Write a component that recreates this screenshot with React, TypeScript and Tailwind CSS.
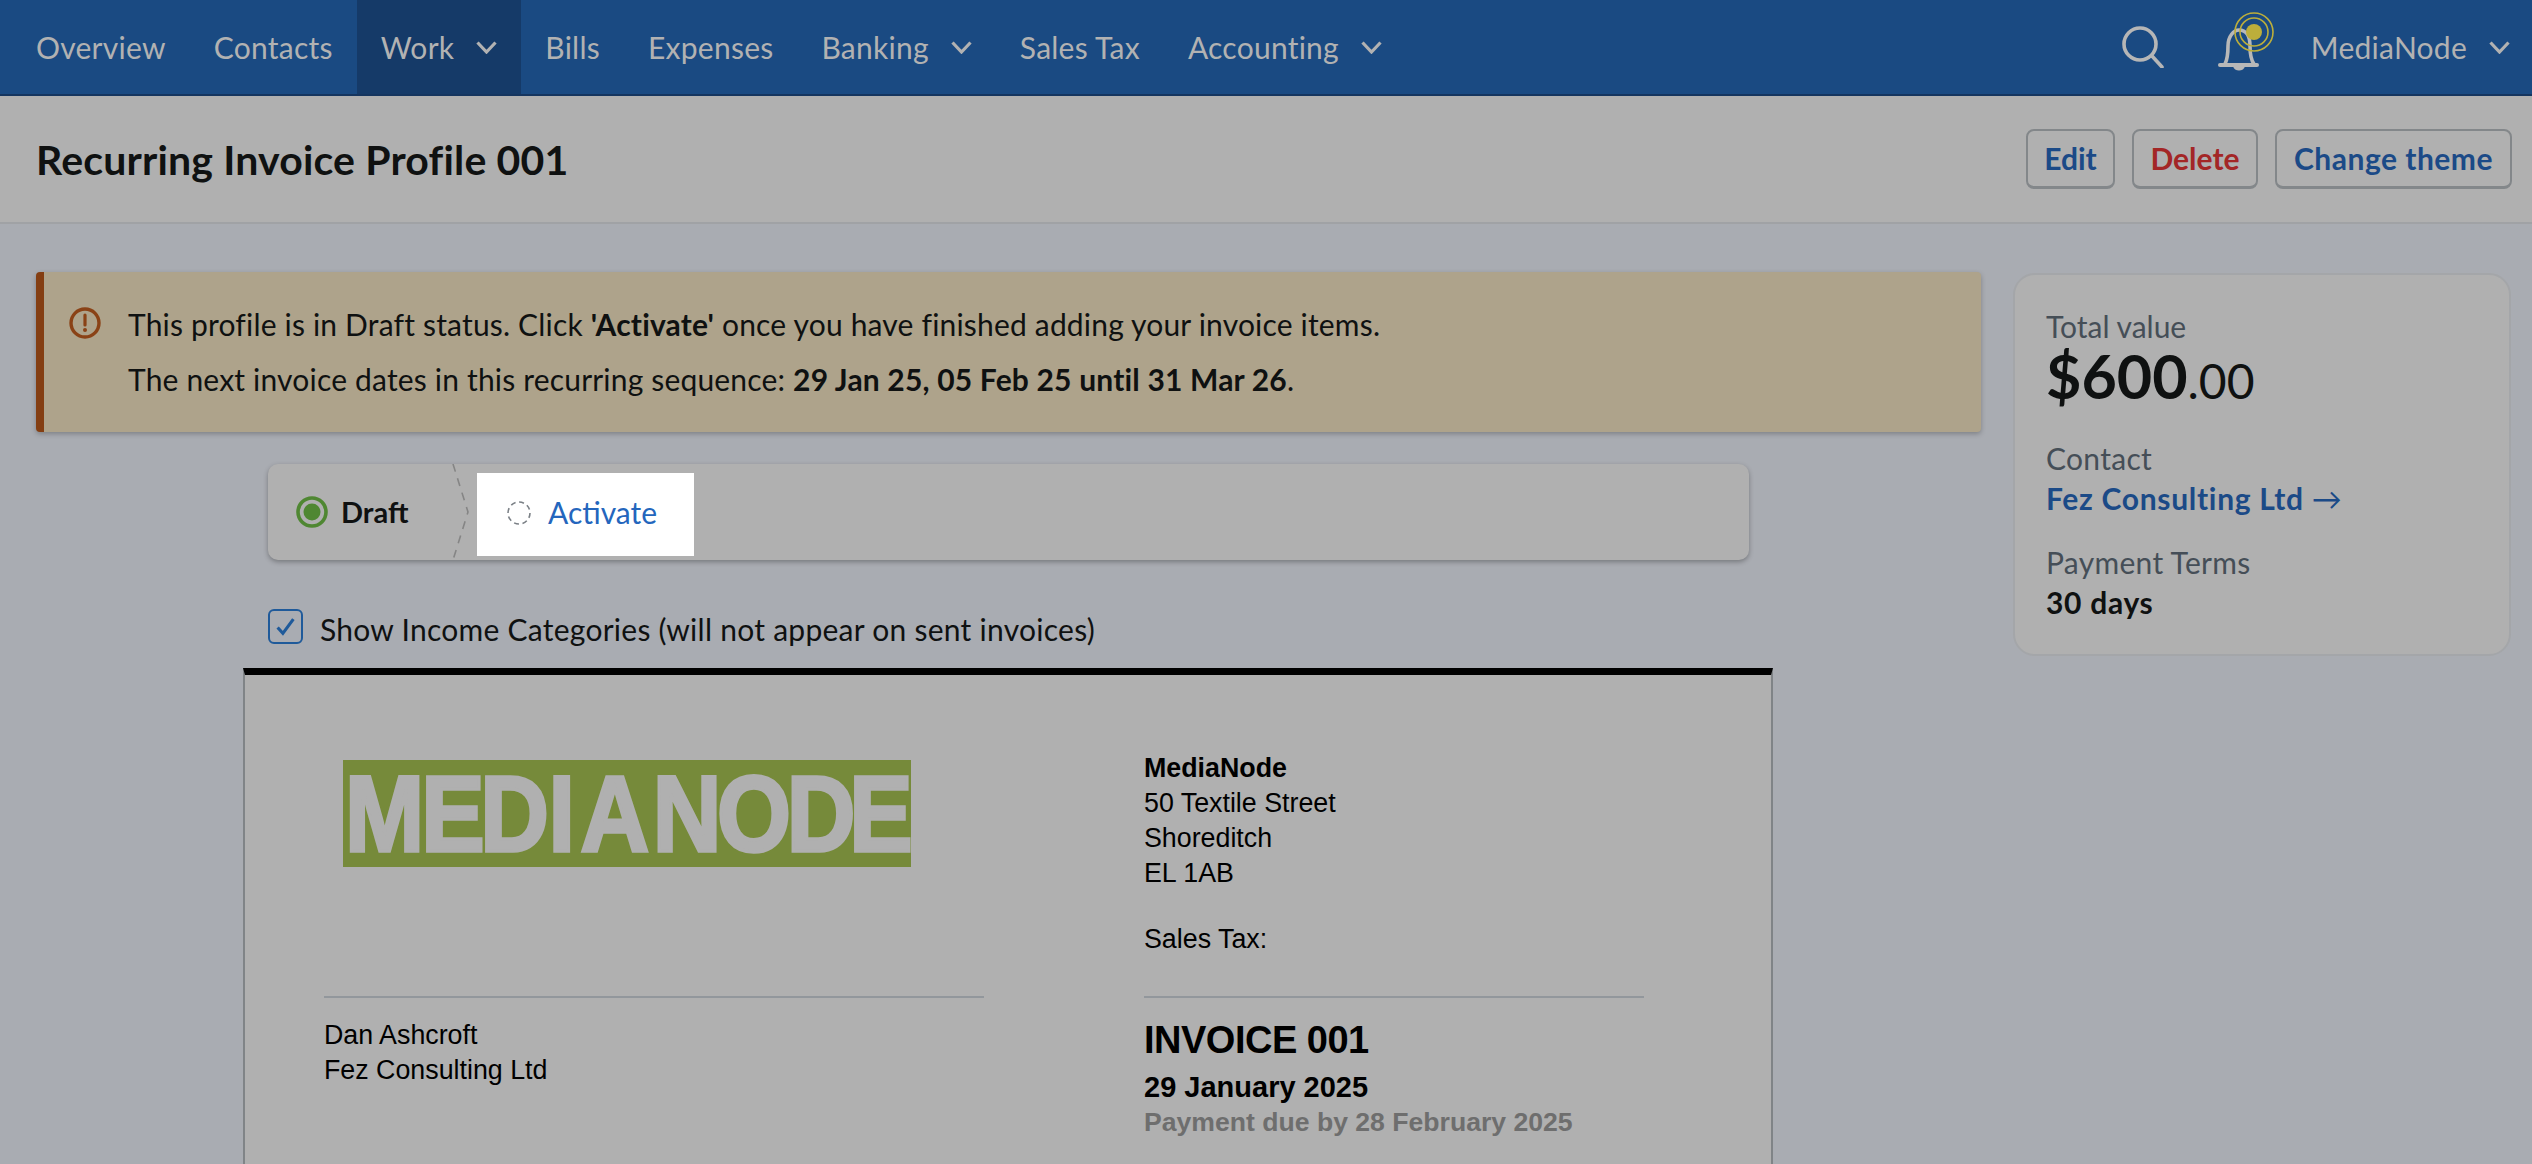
import React from "react";

function Chevron({ className = "" }: { className?: string }) {
  return (
    <svg viewBox="0 0 21 13" className={"w-[21px] h-[13px] " + className} fill="none">
      <path d="M1.5 1.5 L10.5 11 L19.5 1.5" stroke="#b2b2b2" strokeWidth="3.2" />
    </svg>
  );
}

function NavItem({ label, caret, active }: { label: string; caret?: boolean; active?: boolean }) {
  return (
    <div className={"flex h-[94px] items-center gap-[22px] px-[24px] " + (active ? "bg-[#153a68]" : "")}>
      <span>{label}</span>
      {caret && <Chevron />}
    </div>
  );
}

function HeaderButton({ label, className }: { label: string; className: string }) {
  return (
    <div className={"flex h-[60px] items-center justify-center rounded-[8px] border-2 border-b-[3px] border-[#83878a] text-[30px] font-bold " + className}>
      {label}
    </div>
  );
}

export default function App() {
  return (
    <div className="h-[1164px] w-[2532px] overflow-hidden bg-[#a9acb2] [font-family:Lato,sans-serif] text-[#0f1111]">
      <nav className="flex h-[96px] border-b-2 border-[#15355f] bg-[#1a4a82] pl-[12px] pr-[22px] text-[30px] tracking-[0.25px] text-[#b2b2b2]">
        <NavItem label="Overview" />
        <NavItem label="Contacts" />
        <NavItem label="Work" caret active />
        <NavItem label="Bills" />
        <NavItem label="Expenses" />
        <NavItem label="Banking" caret />
        <NavItem label="Sales Tax" />
        <NavItem label="Accounting" caret />
        <div className="ml-auto flex h-[94px] items-center">
          <svg viewBox="0 0 42 42" className="h-[42px] w-[42px]" fill="none" stroke="#b6b6b6" strokeWidth="3.6" strokeLinecap="round">
            <circle cx="18" cy="18" r="16" />
            <path d="M30 30 L40 41" />
          </svg>
          <svg viewBox="0 0 60 62" className="ml-[52px] mt-[10px] h-[62px] w-[60px] self-start" fill="none">
            <path d="M9 54 C11 50 12 46 12 36 C12 26 18 20 23 20 C30 20 34 26 34 36 C34 46 35 50 38 54" stroke="#b8b8b8" strokeWidth="3.6" />
            <path d="M4 55 L41 55" stroke="#b8b8b8" strokeWidth="4" strokeLinecap="round" />
            <path d="M17 56 C18 62 28 62 29 56 Z" fill="#b8b8b8" />
            <circle cx="38" cy="22" r="19" stroke="#bcae3b" strokeWidth="1.6" />
            <circle cx="38" cy="22" r="14" stroke="#bcae3b" strokeWidth="1.6" />
            <circle cx="38" cy="22" r="8" fill="#bcae3b" />
          </svg>
          <span className="ml-[35px]">MediaNode</span>
          <Chevron className="ml-[22px]" />
        </div>
      </nav>

      <header className="flex h-[128px] items-center justify-between border-b-2 border-[#a0a2a5] bg-[#b0b0b0] pl-[36px] pr-[20px]">
        <h1 className="text-[41px] font-bold leading-none tracking-[0.17px] text-[#0f1111]">Recurring Invoice Profile 001</h1>
        <div className="flex gap-[17px]">
          <HeaderButton label="Edit" className="w-[89px] text-[#1b4a87]" />
          <HeaderButton label="Delete" className="w-[126px] text-[#a32626]" />
          <HeaderButton label="Change theme" className="w-[237px] tracking-[0.5px] text-[#1b4a87]" />
        </div>
      </header>

      <main className="flex items-start gap-[32px] pl-[36px] pt-[48px]">
        <div className="w-[1945px] shrink-0">
          <div className="flex h-[160px] rounded-[4px] border-l-[8px] border-[#843e12] bg-[#aea38b] pl-[25px] pt-[34px] shadow-[0_2px_5px_rgba(0,0,0,0.25)]">
            <svg viewBox="0 0 32 32" className="mt-[1px] h-[32px] w-[32px] shrink-0" fill="none">
              <circle cx="16" cy="16" r="14" stroke="#8a4216" strokeWidth="3.4" />
              <path d="M16 8 L16 18" stroke="#8a4216" strokeWidth="3.2" strokeLinecap="round" />
              <circle cx="16" cy="23" r="2" fill="#8a4216" />
            </svg>
            <div className="ml-[27px] text-[30px] leading-[55px] tracking-[0.18px] text-[#0f1111]">
              <p className="-mt-[9px]">
                This profile is in Draft status. Click <b>'Activate'</b> once you have finished adding your invoice items.
              </p>
              <p>
                The next invoice dates in this recurring sequence: <b>29 Jan 25, 05 Feb 25 until 31 Mar 26</b>.
              </p>
            </div>
          </div>

          <div className="ml-[232px] mt-[32px] flex h-[96px] w-[1481px] items-start rounded-[10px] bg-[#b0b0b0] pl-[28px] shadow-[0_2px_5px_rgba(0,0,0,0.3)]">
            <div className="flex h-[96px] items-center">
              <svg viewBox="0 0 32 32" className="h-[32px] w-[32px]" fill="none">
                <circle cx="16" cy="16" r="14" stroke="#4f8732" strokeWidth="3.6" />
                <circle cx="16" cy="16" r="8.5" fill="#4f8732" />
              </svg>
              <span className="ml-[13px] w-[71px] text-[29px] font-bold text-[#0f1111]">Draft</span>
              <svg viewBox="0 0 18 96" className="ml-[40px] h-[96px] w-[18px]" fill="none">
                <path d="M1 0 L16 48 L1 96" stroke="#858585" strokeWidth="1.6" strokeDasharray="8 7" />
              </svg>
            </div>
            <div className="ml-[7px] mt-[9px] flex h-[83px] w-[217px] items-center bg-white pb-[5px] pl-[30px]">
              <svg viewBox="0 0 24 24" className="mt-[1px] h-[24px] w-[24px]" fill="none">
                <circle cx="12" cy="12" r="11" stroke="#7b8086" strokeWidth="1.6" strokeDasharray="5 3.6" />
              </svg>
              <span className="ml-[17px] text-[30px] text-[#2466bd]">Activate</span>
            </div>
          </div>

          <div className="ml-[232px] mt-[38px] flex items-center">
            <div className="flex h-[35px] w-[35px] items-center justify-center rounded-[6px] border-2 border-[#1f5a9a]">
              <svg viewBox="0 0 20 20" className="h-[21px] w-[21px]" fill="none">
                <path d="M2.5 11 L7.5 16.5 L17.5 3" stroke="#1f5a9a" strokeWidth="3" />
              </svg>
            </div>
            <span className="mb-[2px] ml-[17px] mt-[8px] text-[30px] leading-[46px] tracking-[0.26px] text-[#0f1111]">Show Income Categories (will not appear on sent invoices)</span>
          </div>

          <div className="ml-[207px] mt-[14px] h-[520px] w-[1530px] border-x-2 border-t-[7px] border-x-[#808487] border-t-black bg-[#b0b0b0] pl-[79px] [font-family:'Liberation_Sans',sans-serif] text-black">
            <div className="flex h-[321px]">
              <div className="w-[660px] pl-[19px] pt-[85px]">
                <div className="h-[107px] w-[568px] bg-[#768a3a]">
                  <svg viewBox="0 0 568 107" className="h-[107px] w-[568px] overflow-visible">
                    <text transform="scale(0.88 1)" x="2.3 89 156 233.4 270 352 425 504.2 575.3" y="91" fontFamily="Liberation Sans" fontWeight="700" fontSize="108" fill="#b0b0b0" stroke="#b0b0b0" strokeWidth="3.5" strokeLinejoin="miter">MEDIANODE</text>
                  </svg>
                </div>
              </div>
              <div className="ml-[160px] pt-[76px] text-[26.8px] leading-[35px]">
                <p className="font-bold">MediaNode</p>
                <p>50 Textile Street</p>
                <p>Shoreditch</p>
                <p>EL 1AB</p>
                <p className="mt-[31px]">Sales Tax:</p>
              </div>
            </div>
            <div className="flex">
              <div className="w-[660px] border-t-2 border-[#92979c] pt-[20px] text-[26.8px] leading-[35px]">
                <p>Dan Ashcroft</p>
                <p>Fez Consulting Ltd</p>
              </div>
              <div className="ml-[160px] w-[500px] border-t-2 border-[#92979c] pt-[18px] font-bold">
                <p className="text-[38px] leading-[48px] tracking-[-0.5px]">INVOICE 001</p>
                <p className="mt-[4px] text-[29px] leading-[38px]">29 January 2025</p>
                <p className="-mt-[1px] text-[26.6px] leading-[34px] text-[#6e6e6e]">Payment due by 28 February 2025</p>
              </div>
            </div>
          </div>
        </div>

        <aside className="mt-[1px] h-[383px] w-[498px] rounded-[22px] border-2 border-[#a4a6a9] bg-[#b0b0b0] pl-[31px] pt-[31px]">
          <p className="text-[30px] leading-[40px] text-[#454e57]">Total value</p>
          <p className="text-[61px] font-bold leading-[60px] text-[#0f1111]">
            $600<span className="text-[48px] font-normal">.00</span>
          </p>
          <p className="mt-[27px] text-[30px] leading-[40px] tracking-[0.3px] text-[#454e57]">Contact</p>
          <p className="text-[30px] font-bold leading-[40px] tracking-[0.7px] text-[#1b4a87]">Fez Consulting Ltd <span className="font-normal">→</span></p>
          <p className="mt-[24px] text-[30px] leading-[40px] tracking-[0.3px] text-[#454e57]">Payment Terms</p>
          <p className="text-[30px] font-bold leading-[40px] tracking-[0.7px] text-[#0f1111]">30 days</p>
        </aside>
      </main>
    </div>
  );
}
